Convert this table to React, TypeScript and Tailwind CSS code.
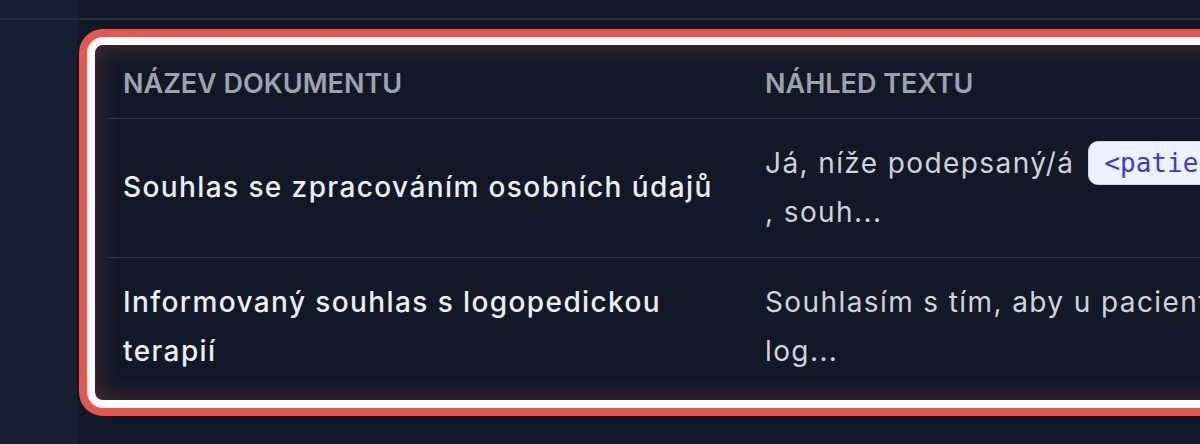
const rows = [
  {
    name: "Souhlas se zpracováním osobních údajů",
    preview: [
      <span key="a">Já, níže podepsaný/á</span>,
      <code
        key="b"
        className="inline-block rounded-[10px] border border-[#c7d2fe] bg-[#eef2ff] px-[15px] py-[6px] font-['DejaVu_Sans_Mono',monospace] text-[26px] leading-[30px] tracking-normal text-[#4338ca]"
      >
        &lt;patient_name&gt;
      </code>,
      <span key="c">, souh...</span>,
    ],
  },
  {
    name: "Informovaný souhlas s logopedickou terapií",
    preview: [<span key="a">Souhlasím s tím, aby u pacienta byla zahájena log...</span>],
  },
];

export default function App() {
  return (
    <div className="flex h-[444px] w-full overflow-hidden bg-[#111827] font-['Inter',sans-serif]">
      <aside className="w-[77px] shrink-0 bg-[#162030]">
        <div className="h-[20px] border-b-2 border-[#222c3a]" />
      </aside>

      <main className="min-w-0 flex-1 overflow-hidden">
        <div className="h-[20px] border-b-2 border-[#222c3a]" />

        <section className="ml-[10px] mt-[17px] w-[1400px] rounded-[16px] border-8 border-white bg-[#111827] px-3 pb-1 shadow-[inset_0_0_24px_rgba(232,85,75,0.3),0_0_14px_rgba(0,0,0,0.45)] ring-8 ring-[#e8554b]">
          <table className="w-full table-fixed border-collapse text-left">
            <colgroup>
              <col className="w-[642px]" />
              <col />
            </colgroup>
            <thead>
              <tr className="border-b border-[#2b3746]">
                <th className="h-[73px] px-4 pt-[6px] align-middle text-[27px] font-semibold uppercase leading-[40px] text-[#9ca3af]">
                  Název dokumentu
                </th>
                <th className="h-[73px] px-4 pt-[6px] align-middle text-[27px] font-semibold uppercase leading-[40px] text-[#9ca3af]">
                  Náhled textu
                </th>
              </tr>
            </thead>
            <tbody>
              {rows.map((row, i) => (
                <tr
                  key={row.name}
                  className={i < rows.length - 1 ? "border-b border-[#2b3746]" : ""}
                >
                  <td className="px-4 py-5 align-middle text-[28px] font-medium leading-[49px] tracking-[0.05em] text-[#eceef2]">
                    {row.name}
                  </td>
                  <td className="px-4 py-5 align-middle text-[28px] leading-[49px] tracking-[0.05em] text-[#cfd3da]">
                    <div className="flex w-[676px] flex-wrap items-center gap-x-[14px]">
                      {row.preview}
                    </div>
                  </td>
                </tr>
              ))}
            </tbody>
          </table>
        </section>
      </main>
    </div>
  );
}
